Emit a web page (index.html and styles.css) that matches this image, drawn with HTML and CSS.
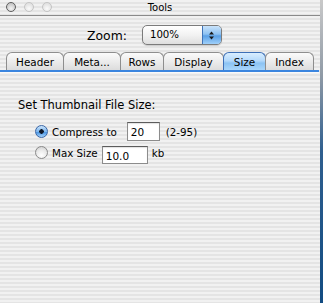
FILE: index.html
```html
<!DOCTYPE html>
<html lang="en">
<head>
    <meta charset="UTF-8">
    <meta name="viewport" content="width=device-width, initial-scale=1.0">
    <title>Tools</title>
    <link rel="stylesheet" href="styles.css">
</head>
<body>
    <div id="screen">
        <div id="window">
            <div class="titlebar">
                <div class="lights">
                    <span class="light light_close"></span>
                    <span class="light"></span>
                    <span class="light"></span>
                </div>
                <div class="title">Tools</div>
                <div></div>
            </div>

            <div class="zoom_row">
                <span class="zoom_label">Zoom:</span>
                <div class="popup">
                    <span class="popup_value">100%</span>
                    <span class="popup_arrows">
                        <svg width="7" height="9" viewBox="0 0 7 9">
                            <path d="M3.5 0.5 L6 3.5 L1 3.5 Z" fill="#1a1a1a"/>
                            <path d="M3.5 8.5 L6 5.5 L1 5.5 Z" fill="#1a1a1a"/>
                        </svg>
                    </span>
                </div>
            </div>

            <div class="tabs">
                <div class="tab tab_header">Header</div>
                <div class="tab tab_meta">Meta...</div>
                <div class="tab tab_rows">Rows</div>
                <div class="tab tab_display">Display</div>
                <div class="tab tab_size selected">Size</div>
                <div class="tab tab_index">Index</div>
            </div>
            <div class="tab_rule"></div>

            <div class="pane">
                <div class="pane_title">Set Thumbnail File Size:</div>
                <div class="option_row">
                    <span class="radio checked"></span>
                    <span class="option_label">Compress to</span>
                    <input class="field field_compress" type="text" value="20">
                    <span class="hint">(2-95)</span>
                </div>
                <div class="option_row row_max">
                    <span class="radio"></span>
                    <span class="option_label">Max Size</span>
                    <input class="field field_max" type="text" value="10.0">
                    <span class="option_label">kb</span>
                </div>
            </div>
        </div>
        <div id="edge"></div>
    </div>
</body>
</html>
```

FILE: styles.css
```css
html, body{
    margin: 0;
    padding: 0;
}

body{
    width: 323px;
    height: 303px;
    overflow: hidden;
    font-family: "DejaVu Sans", "Liberation Sans", sans-serif;
    color: #000;
}

#screen{
    display: flex;
    height: 303px;
}

#window{
    width: 320px;
    display: flex;
    flex-direction: column;
    background: repeating-linear-gradient(to bottom, #f1f1f1 0px, #f1f1f1 2px, #e4e4e4 2px, #e4e4e4 4px);
}

#edge{
    width: 3px;
    background: linear-gradient(to bottom, #c9c9c9 0%, #8f9aa6 25%, #2f5f8f 50%, #124c82 100%);
}

/* title bar */
.titlebar{
    height: 15px;
    border-bottom: 1px solid #8a8a8a;
    display: grid;
    grid-template-columns: 1fr auto 1fr;
    align-items: center;
}

.lights{
    display: flex;
    gap: 8px;
    padding-left: 6px;
    margin-top: -2px;
}

.light{
    width: 8px;
    height: 8px;
    border-radius: 50%;
    border: 1px solid #c4c4c4;
    background: radial-gradient(circle at 50% 70%, #fafafa 0%, #e2e2e2 70%);
}

.light_close{
    border-color: #5e5e5e;
    background: radial-gradient(circle at 50% 70%, #f4f4f4 0%, #c8c8c8 70%);
}

.title{
    font-size: 10px;
    margin-top: -1px;
}

/* zoom popup */
.zoom_row{
    display: flex;
    align-items: center;
    padding: 9px 0 0 87px;
    gap: 15px;
}

.zoom_label{
    font-size: 12.4px;
}

.popup{
    width: 78px;
    height: 18px;
    display: flex;
    border: 1px solid #7b7b7b;
    border-radius: 5px;
    overflow: hidden;
    background: linear-gradient(to bottom, #ffffff 0%, #f2f2f2 50%, #dedede 100%);
    box-shadow: 0 1px 1px rgba(0,0,0,0.15);
}

.popup_value{
    flex: 1;
    font-size: 10.2px;
    line-height: 18px;
    padding-left: 7px;
}

.popup_arrows{
    width: 18px;
    display: flex;
    align-items: center;
    justify-content: center;
    border-left: 1px solid #3f73b8;
    background: linear-gradient(to bottom, #c9e3fb 0%, #8ec2f2 45%, #5aa0e6 55%, #9fd0fa 100%);
}

/* tabs */
.tabs{
    display: flex;
    margin-top: 7px;
    padding-left: 6px;
    height: 18px;
}

.tab{
    box-sizing: border-box;
    height: 18px;
    margin-left: -1px;
    border: 1px solid #8e8e8e;
    border-bottom: none;
    border-radius: 6px 6px 0 0;
    background: linear-gradient(to bottom, #fbfbfb 0%, #ececec 50%, #dcdcdc 100%);
    font-size: 10.4px;
    line-height: 18px;
    text-align: center;
}

.tab_header{ width: 58px; margin-left: 0; }
.tab_meta{ width: 58px; }
.tab_rows{ width: 44px; }
.tab_display{ width: 61px; }
.tab_size{ width: 43px; }
.tab_index{ width: 49px; }

.tab.selected{
    border-color: #3d6fb6;
    background: linear-gradient(to bottom, #d9eeff 0%, #b4d9fb 45%, #8cc3f3 60%, #a9d6fb 100%);
}

.tab_rule{
    width: 319px;
    height: 2px;
    background: #3c86df;
    border-bottom: 1px solid #fafafa;
}

/* pane */
.pane{
    padding: 25px 0 0 18px;
}

.pane_title{
    font-size: 11.5px;
    line-height: 14px;
}

.option_row{
    display: flex;
    align-items: center;
    height: 19px;
    margin-top: 10px;
    padding-left: 17px;
    font-size: 10.3px;
}

.row_max{
    margin-top: 2px;
}

.radio{
    box-sizing: border-box;
    width: 13px;
    height: 13px;
    border-radius: 50%;
    border: 1px solid #8a8a8a;
    background: radial-gradient(circle at 50% 75%, #ffffff 0%, #e8e8e8 55%, #c9c9c9 100%);
    margin-right: 4px;
}

.radio.checked{
    border-color: #3b66a6;
    background: radial-gradient(circle at 50% 50%, #101828 0px, #101828 2px, transparent 2.5px),
                linear-gradient(to bottom, #cbe4fb 0%, #7cb6ee 50%, #4f98e3 60%, #a6d3fb 100%);
}

.field{
    box-sizing: border-box;
    height: 19px;
    border: 1px solid #8c8c8c;
    border-top-color: #5c5c5c;
    box-shadow: inset 0 1px 1px rgba(0,0,0,0.12);
    background: #fff;
    font-family: "DejaVu Sans", "Liberation Sans", sans-serif;
    font-size: 10.5px;
    padding: 0 0 0 3px;
    margin: 0;
}

.field_compress{
    width: 33px;
    margin-left: 10px;
}

.field_max{
    width: 46px;
    height: 18px;
    margin: 4px 4px 0 4px;
    padding-top: 3px;
}

.hint{
    font-size: 10.3px;
    margin-left: 6px;
}
```
